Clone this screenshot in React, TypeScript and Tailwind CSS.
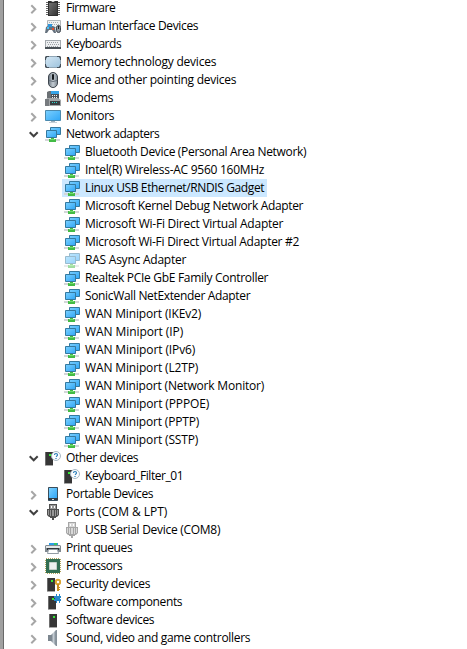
import { useLayoutEffect, useRef, useState } from "react";
import type { ReactNode } from "react";

const Tower = ({ x = 4 }: { x?: number }) => (
  <g transform={`translate(${x} 0)`}>
    <path d="M0 2h8v13H0z" fill="#6d6d6d" />
    <path d="M1 2h7v13H1z" fill="#363636" />
    <path d="M0 15h8v1H0z" fill="#a8a8a8" />
    <path d="M4 4h2v2H4z" fill="#35e835" />
  </g>
);

const Plug = ({ c, d }: { c: string; d: string }) => (
  <>
    <path d="M4 0h8v5H4z" fill={d} />
    <path d="M5 1h6v4H5z" fill={c} />
    <path d="M6 2h1v2H6zM9 2h1v2H9z" fill="#fff" />
    <path d="M2 5h12v6l-2 2H4l-2-2z" fill={d} />
    <path d="M3 6h1v5H3zM5 6h1v6H5zM7 6h2v6H7zM10 6h1v6h-1zM12 6h1v5h-1z" fill={c} />
    <path d="M5 13h6v1H5zM7 14h2v2H7z" fill={d} />
  </>
);

const icons: Record<string, ReactNode> = {
  firmware: (
    <>
      <path d="M1 2.500h14M1 4.500h14M1 6.500h14M1 8.500h14M1 10.500h14M1 12.500h14M1 14.500h14" stroke="#666" />
      <path d="M3 1h3l2 1 2-1h3v15H3z" fill="#303030" />
      <path d="M4 3h8v12H4z" fill="url(#chip)" />
    </>
  ),
  hid: (
    <>
      <path d="M2.500 2.500h13v7h-13z" fill="#eef0f1" stroke="#b0b5b8" />
      <path d="M4 4.500h10M5 6.500h9" stroke="#a7acb0" strokeDasharray="1 1" />
      <path d="M0 15l1-6 2-1h5l2 1 1 6H9l-2-3H4l-2 3z" fill="#66727e" />
      <path d="M3 6h4v3H3z" fill="#2f96dd" />
      <path d="M2 9h2v2H2z" fill="#4cc2f5" />
      <path d="M7 10h2v2H7z" fill="#e05030" />
      <rect x="11.500" y="7.500" width="4" height="7" rx="2" fill="#8e979f" stroke="#3d454d" />
      <path d="M13 8h1v3h-1z" fill="#222" />
    </>
  ),
  keyboard: (
    <>
      <path d="M0 4h16v9H0z" fill="#a3a9ae" />
      <path d="M1 5h14v6H1z" fill="#eceef0" />
      <path d="M2 6.500h12M3 8.500h11M2 10.500h12" stroke="#9aa0a5" strokeDasharray="1 1" />
      <path d="M0 11h16v2H0z" fill="#4a5157" />
    </>
  ),
  memory: (
    <>
      <path d="M1 2h14l1 1v10l-1 1H1l-1-1V3z" fill="#46515a" />
      <path d="M2 3h12l1 2v6l-1 2H2l-1-2V5z" fill="url(#card)" />
      <path d="M4 2h8v1H4zM4 13h8v1H4zM0 6h1v4H0zM15 6h1v4h-1z" fill="#8fa5b5" />
    </>
  ),
  mouse: (
    <>
      <rect x="3.500" y=".5" width="9" height="15" rx="4.500" fill="url(#metal)" stroke="#3e454d" />
      <path d="M4 8.500q4 2 8 0" fill="none" stroke="#66717c" />
      <rect x="7" y="2" width="2" height="6" rx="1" fill="#15191d" />
    </>
  ),
  modem: (
    <>
      <path d="M5 1h9v9H5z" fill="#4b5258" />
      <path d="M6 1h8v3H6z" fill="#37a5e8" />
      <path d="M7 5.500h6M7 7.500h6" stroke="#eef0f1" strokeDasharray="1 1" />
      <path d="M2 2l2-1h2v8H2z" fill="#6b7074" />
      <path d="M0 11l2-3h11l3 2v6H0z" fill="#a3a6a8" />
      <path d="M0 9h4v7H0z" fill="#777b7f" />
      <path d="M5 11h10v4H5z" fill="#3b3e41" />
      <path d="M7 12.500h5" stroke="#2edbd0" strokeDasharray="1 1" />
    </>
  ),
  monitor: (
    <>
      <path d="M.5 2.500h15v10H.5z" fill="url(#screen)" stroke="#4b89ad" />
      <path d="M6 13h4v1H6z" fill="#9eb0bc" />
      <path d="M4 14h8v1H4z" fill="#c5d0d7" />
    </>
  ),
  network: (
    <>
      <path d="M5.500 1.500h10v7h-10z" fill="url(#screen)" stroke="#35799f" />
      <path d="M1.500 4.500h10v7h-10z" fill="url(#screen)" stroke="#35799f" />
      <path d="M0 13h15v2H0z" fill="#d3d6d8" />
      <path d="M6 12h3v1h2v3H4v-3h2z" fill="#43bb45" />
      <path d="M5 13h5v1H5z" fill="#6fd86f" />
    </>
  ),
  other: (
    <>
      <Tower x={0} />
      <circle cx="11" cy="6" r="4.500" fill="#fbfdff" stroke="#a9b8c4" />
      <path d="M9.500 5q0-1.500 1.500-1.500T12.500 5q0 .8-1.500 1.700M11 8v1" fill="none" stroke="#287cb8" strokeWidth="1.200" />
    </>
  ),
  portable: (
    <>
      <rect x="3" y="1" width="10" height="14" rx=".7" fill="#3a4d5b" />
      <path d="M4 2h8v10H4z" fill="url(#screen)" />
      <path d="M3 12h10v2H3z" fill="#303a42" />
      <path d="M7 13h2v1H7z" fill="#d6dce0" />
    </>
  ),
  port: <Plug c="#999" d="#505050" />,
  serial: <Plug c="#d8d8d8" d="#a6a6a6" />,
  printer: (
    <>
      <path d="M4 3h9v3H4z" fill="#2b9de8" />
      <path d="M9 3h3v2H9z" fill="#35c66b" />
      <path d="M1 5h14l1 1v6H0V6z" fill="#808990" />
      <path d="M1 6h14v2H1z" fill="#e3e7e9" />
      <path d="M2 8h12v2H2z" fill="#30363b" />
      <path d="M3.500 9.500h9l1 4h-11z" fill="#fff" stroke="#929ca4" />
    </>
  ),
  cpu: (
    <>
      <rect x="1" y="1" width="14" height="14" fill="none" stroke="#b0a35c" strokeWidth="2" strokeDasharray="1 1" />
      <path d="M1 1h14v14H1z" fill="#326e52" />
      <path d="M4.500 4.500h7v7h-7z" fill="#eef0ee" stroke="#c5cfc8" />
    </>
  ),
  security: (
    <>
      <Tower x={2} />
      <circle cx="13" cy="6" r="2.200" fill="none" stroke="#dca530" strokeWidth="2" />
      <path d="M12 8h2v7h-2zM14 11h1v1h-1zM14 13h1v1h-1z" fill="#c98d20" />
    </>
  ),
  component: (
    <>
      <Tower x={3} />
      <path d="M9 2h2V0h1v2h2V0h1v2h1v2h-1v1h1v2h-1v2h-1V7h-2v2h-1V7H9V5h1V4H9z" fill="#2588ca" />
    </>
  ),
  software: <Tower />,
  sound: (
    <>
      <path d="M3 5h4v6H3z" fill="#7c868f" />
      <path d="M6 5l5-5v16l-5-5z" fill="url(#metal)" />
      <path d="M11 0h1v16h-1z" fill="#87919a" />
    </>
  ),
};

type Row = { t: string; i: string; w: number; s?: "open" | "child"; selected?: boolean; faded?: boolean };

const rows: Row[] = [
  { t: "Firmware", i: "firmware", w: 49 },
  { t: "Human Interface Devices", i: "hid", w: 132 },
  { t: "Keyboards", i: "keyboard", w: 55 },
  { t: "Memory technology devices", i: "memory", w: 150 },
  { t: "Mice and other pointing devices", i: "mouse", w: 170 },
  { t: "Modems", i: "modem", w: 47 },
  { t: "Monitors", i: "monitor", w: 48 },
  { t: "Network adapters", i: "network", w: 93, s: "open" },
  { t: "Bluetooth Device (Personal Area Network)", i: "network", w: 221, s: "child" },
  { t: "Intel(R) Wireless-AC 9560 160MHz", i: "network", w: 179, s: "child" },
  { t: "Linux USB Ethernet/RNDIS Gadget", i: "network", w: 179, s: "child", selected: true },
  { t: "Microsoft Kernel Debug Network Adapter", i: "network", w: 218, s: "child" },
  { t: "Microsoft Wi-Fi Direct Virtual Adapter", i: "network", w: 198, s: "child" },
  { t: "Microsoft Wi-Fi Direct Virtual Adapter #2", i: "network", w: 214, s: "child" },
  { t: "RAS Async Adapter", i: "network", w: 101, s: "child", faded: true },
  { t: "Realtek PCIe GbE Family Controller", i: "network", w: 183, s: "child" },
  { t: "SonicWall NetExtender Adapter", i: "network", w: 165, s: "child" },
  { t: "WAN Miniport (IKEv2)", i: "network", w: 116, s: "child" },
  { t: "WAN Miniport (IP)", i: "network", w: 98, s: "child" },
  { t: "WAN Miniport (IPv6)", i: "network", w: 110, s: "child" },
  { t: "WAN Miniport (L2TP)", i: "network", w: 113, s: "child" },
  { t: "WAN Miniport (Network Monitor)", i: "network", w: 179, s: "child" },
  { t: "WAN Miniport (PPPOE)", i: "network", w: 124, s: "child" },
  { t: "WAN Miniport (PPTP)", i: "network", w: 114, s: "child" },
  { t: "WAN Miniport (SSTP)", i: "network", w: 113, s: "child" },
  { t: "Other devices", i: "other", w: 72, s: "open" },
  { t: "Keyboard_Filter_01", i: "other", w: 98, s: "child" },
  { t: "Portable Devices", i: "portable", w: 87 },
  { t: "Ports (COM & LPT)", i: "port", w: 101, s: "open" },
  { t: "USB Serial Device (COM8)", i: "serial", w: 135, s: "child" },
  { t: "Print queues", i: "printer", w: 66 },
  { t: "Processors", i: "cpu", w: 56 },
  { t: "Security devices", i: "security", w: 84 },
  { t: "Software components", i: "component", w: 116 },
  { t: "Software devices", i: "software", w: 88 },
  { t: "Sound, video and game controllers", i: "sound", w: 184 },
];

function Label({ text, width }: { text: string; width: number }) {
  const ref = useRef<HTMLSpanElement>(null);
  const [spacing, setSpacing] = useState(0);
  useLayoutEffect(() => {
    const natural = ref.current!.getBoundingClientRect().width - spacing * text.length;
    setSpacing((width + 0.2 - natural) / text.length);
  }, [text, width]);
  return (
    <span ref={ref} className="whitespace-pre" style={{ letterSpacing: `${spacing}px` }}>
      {text}
    </span>
  );
}

function TreeRow({ row }: { row: Row }) {
  const child = row.s === "child";
  return (
    <div className={child ? "flex h-[18px] shrink-0 pl-[58px]" : "flex h-[18px] shrink-0 pl-[25px]"}>
      {!child && (
        <svg className="mt-px mr-[-2px] h-4 w-4 shrink-0" viewBox="0 0 16 16" fill="none">
          {row.s === "open" ? (
            <path d="M.7 6.300l4 4 4-4" stroke="#404040" strokeWidth="2" />
          ) : (
            <path d="M2.300 5.300l4 4-4 4" stroke="#a6a6a6" strokeWidth="2" />
          )}
        </svg>
      )}
      <div className={row.selected ? "flex bg-[#cce8ff] pr-[3px] pl-[2px]" : "flex pr-[3px] pl-[2px]"}>
        <svg
          className={row.faded ? "mt-px mr-[5px] h-4 w-4 shrink-0 opacity-50" : "mt-px mr-[5px] h-4 w-4 shrink-0"}
          viewBox="0 0 16 16"
        >
          {icons[row.i]}
        </svg>
        <Label text={row.t} width={row.w} />
      </div>
    </div>
  );
}

export default function App() {
  return (
    <div className="flex h-[649px] w-[467px] overflow-hidden bg-white font-['Open_Sans','Noto_Sans',sans-serif] text-[12px] leading-[17px] text-black">
      <svg className="h-0 w-0" aria-hidden="true">
        <defs>
          <linearGradient id="screen" x2="1" y2="1"><stop stopColor="#7bd0ff" /><stop offset="1" stopColor="#2fa6f6" /></linearGradient>
          <linearGradient id="chip" x2="1" y2="1"><stop stopColor="#707070" /><stop offset="1" stopColor="#353535" /></linearGradient>
          <linearGradient id="card" x2="1" y2="1"><stop stopColor="#d3e6f3" /><stop offset="1" stopColor="#9fc4de" /></linearGradient>
          <linearGradient id="metal"><stop stopColor="#6c7781" /><stop offset=".5" stopColor="#c4ccd3" /><stop offset="1" stopColor="#7d8892" /></linearGradient>
        </defs>
      </svg>
      <div className="w-1 shrink-0 border-r border-[#696969] bg-[#a0a0a0]" />
      <main className="-mt-px flex flex-col">
        {rows.map((row) => (
          <TreeRow key={row.t} row={row} />
        ))}
      </main>
    </div>
  );
}
